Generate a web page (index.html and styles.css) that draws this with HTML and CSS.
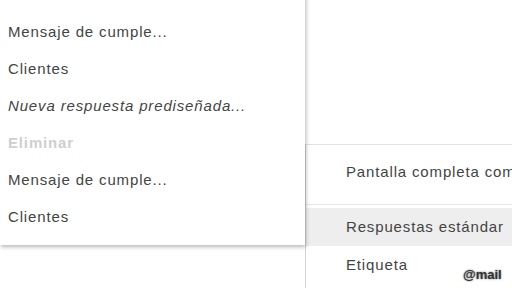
FILE: index.html
```html
<!DOCTYPE html>
<html lang="es">
<head>
<meta charset="utf-8">
<link rel="stylesheet" href="styles.css">
</head>
<body>
<div class="page">
  <div class="menu-left">
    <div class="item head">Insertar</div>
    <div class="item">Mensaje de cumple...</div>
    <div class="item">Clientes</div>
    <div class="item italic">Nueva respuesta prediseñada...</div>
    <div class="item head">Eliminar</div>
    <div class="item">Mensaje de cumple...</div>
    <div class="item">Clientes</div>
  </div>
  <div class="menu-right">
    <div class="ritem first">Pantalla completa como predeterminada</div>
    <div class="sep"></div>
    <div class="ritem active">Respuestas estándar</div>
    <div class="ritem">Etiqueta</div>
  </div>
  <div class="mark">@mail</div>
</div>
</body>
</html>
```
FILE: styles.css
```css
html, body {
  margin: 0;
  padding: 0;
  background: #fff;
}
.page {
  position: relative;
  width: 512px;
  height: 288px;
  overflow: hidden;
  font-family: "Liberation Sans", Arial, sans-serif;
  font-size: 15px;
  letter-spacing: 0.85px;
  color: #444;
}
.menu-left {
  position: absolute;
  left: 0;
  top: -24px;
  width: 305px;
  padding-bottom: 10px;
  background: #fff;
  box-shadow: 1px 2px 4px rgba(0,0,0,0.28);
  z-index: 2;
}
.item {
  height: 37px;
  line-height: 37px;
  padding-left: 8px;
  white-space: nowrap;
}
.item.head {
  color: #cfcfcf;
  font-weight: bold;
}
.item.italic {
  font-style: italic;
}
.menu-right {
  position: absolute;
  left: 305px;
  top: 144px;
  right: 0;
  bottom: 0;
  background: #fff;
  border-top: 1px solid #e2e2e2;
  border-left: 1px solid #d4d4d4;
  padding-top: 8px;
  z-index: 1;
}
.ritem {
  height: 38px;
  line-height: 38px;
  padding-left: 40px;
  white-space: nowrap;
  overflow: hidden;
}
.ritem.active {
  background: #eeeeee;
}
.sep {
  height: 1px;
  background: #e6e6e6;
  margin: 13px 0 3px;
}
.mark {
  position: absolute;
  left: 463px;
  top: 267px;
  font-size: 13px;
  font-weight: bold;
  letter-spacing: 0;
  color: #333;
  text-shadow: 0 0 2px #666;
  z-index: 3;
}
```
